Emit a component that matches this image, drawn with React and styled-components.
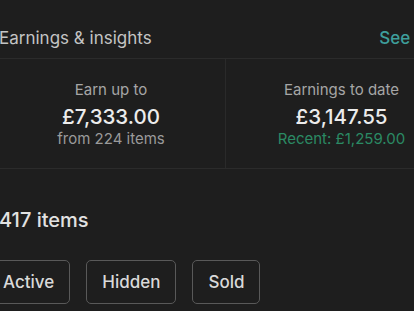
import React from "react";
import styled, { createGlobalStyle } from "styled-components";

const Global = createGlobalStyle`
  html, body {
    margin: 0;
    padding: 0;
    background: #1e1e1e;
    overflow: hidden;
  }
  body {
    font-family: Inter, "Noto Sans", "Liberation Sans", sans-serif;
    -webkit-font-smoothing: antialiased;
  }
`;

const Page = styled.div`
  width: 480px;
  margin-left: -17px;
  background: #1e1e1e;
  color: #e6e6e6;
`;

const Header = styled.div`
  display: flex;
  align-items: flex-start;
  justify-content: space-between;
  height: 59px;
  padding: 28px 16px 0 16px;
  box-sizing: border-box;
  border-bottom: 1px solid #2b2b2b;
`;

const Title = styled.h2`
  margin: 0;
  font-size: 17px;
  line-height: 20px;
  font-weight: 400;
  color: #c4c4c4;
`;

const Link = styled.a`
  font-size: 17px;
  line-height: 20px;
  font-weight: 500;
  color: #3e9f9c;
  text-decoration: none;
  margin-right: 14px;
`;

const Stats = styled.div`
  display: grid;
  grid-template-columns: 228px 232px;
  margin-left: 14px;
  height: 109px;
`;

const Stat = styled.div`
  display: flex;
  flex-direction: column;
  align-items: center;
  padding-top: 22px;
  border-left: ${(p) => (p.$divider ? "1px solid #2a2a2a" : "none")};
`;

const Label = styled.div`
  font-size: 15px;
  line-height: 18px;
  color: #a6a6a6;
`;

const Amount = styled.div`
  font-size: 20.5px;
  line-height: 24px;
  font-weight: 500;
  color: #ececec;
  margin-top: 6px;
`;

const Sub = styled.div`
  font-size: 15px;
  line-height: 18px;
  color: ${(p) => (p.$accent ? "#2b8a64" : "#9a9a9a")};
  margin-top: 1px;
`;

const Rule = styled.div`
  border-top: 1px solid #2b2b2b;
`;

const Section = styled.div`
  padding: 39px 16px 0 16px;
`;

const Count = styled.h3`
  margin: 0;
  font-size: 20px;
  line-height: 24px;
  font-weight: 500;
  color: #e2e2e2;
`;

const Filters = styled.div`
  display: flex;
  gap: 16px;
  margin-top: 28px;
  margin-left: -12px;
`;

const Chip = styled.button`
  height: 44px;
  padding: 0 15px;
  border: 1.5px solid #595959;
  border-radius: 5px;
  background: transparent;
  color: #d9d9d9;
  font-family: inherit;
  font-size: 17px;
  font-weight: 500;
`;

export default function App() {
  return (
    <>
      <Global />
      <Page>
        <Header>
          <Title>Earnings &amp; insights</Title>
          <Link>See all</Link>
        </Header>
        <Stats>
          <Stat>
            <Label>Earn up to</Label>
            <Amount>£7,333.00</Amount>
            <Sub>from 224 items</Sub>
          </Stat>
          <Stat $divider>
            <Label>Earnings to date</Label>
            <Amount>£3,147.55</Amount>
            <Sub $accent>Recent: £1,259.00</Sub>
          </Stat>
        </Stats>
        <Rule />
        <Section>
          <Count>417 items</Count>
          <Filters>
            <Chip>Active</Chip>
            <Chip>Hidden</Chip>
            <Chip>Sold</Chip>
          </Filters>
        </Section>
      </Page>
    </>
  );
}
